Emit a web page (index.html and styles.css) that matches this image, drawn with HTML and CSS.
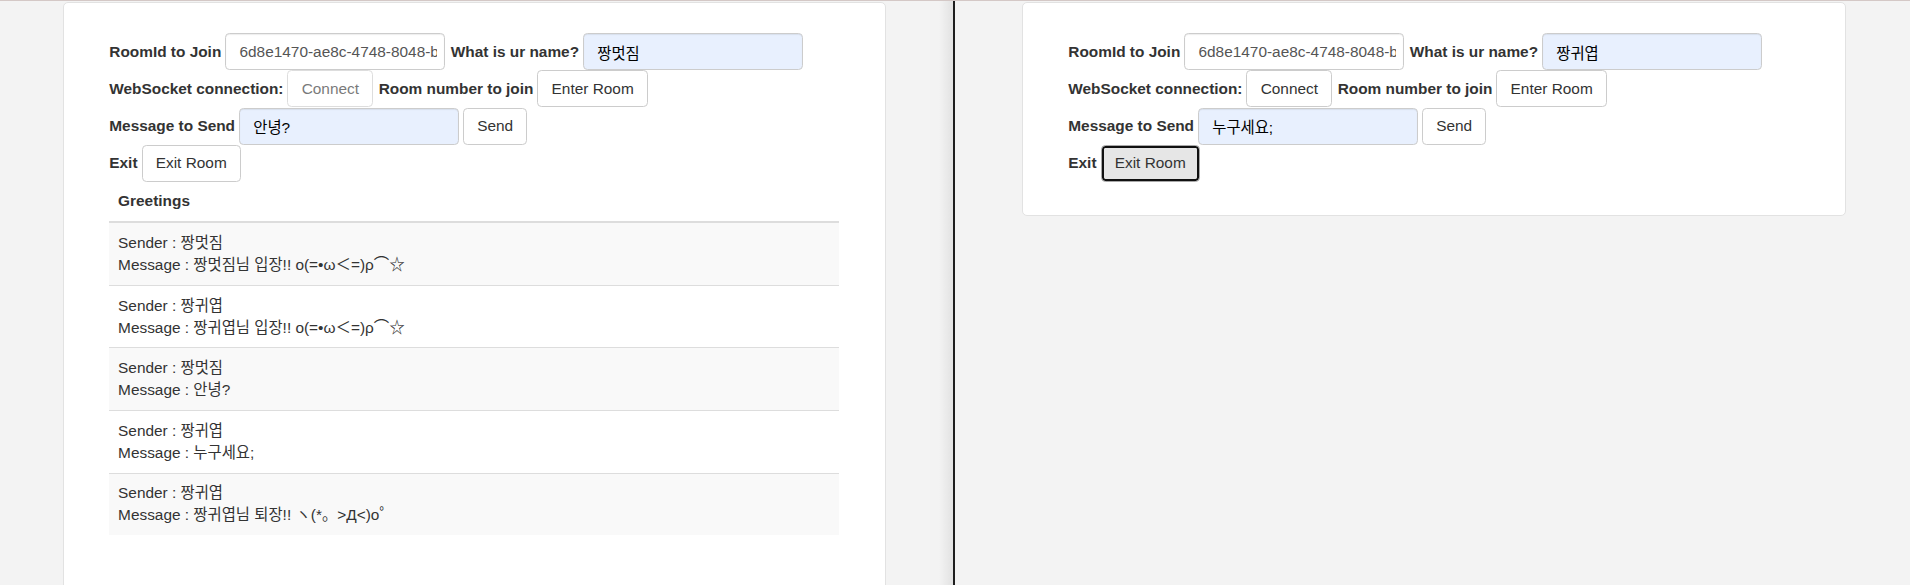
FILE: index.html
```html
<!DOCTYPE html>
<html lang="ko">
<head>
<meta charset="utf-8">
<title>Chat rooms</title>
<link rel="stylesheet" href="styles.css">
</head>
<body>
<div class="screen">
  <div class="pane pane-left">
    <div class="card card-left">
      <div class="row">
        <label class="lbl">RoomId to Join</label>
        <input class="ctl inp inp-room" type="text" value="6d8e1470-ae8c-4748-8048-b1c2d3e4f5a6">
        <label class="lbl">What is ur name?</label>
        <input class="ctl inp auto" type="text" value="짱멋짐">
      </div>
      <div class="row">
        <label class="lbl">WebSocket connection:</label>
        <button class="ctl btn" disabled>Connect</button>
        <label class="lbl">Room number to join</label>
        <button class="ctl btn">Enter Room</button>
      </div>
      <div class="row">
        <label class="lbl">Message to Send</label>
        <input class="ctl inp auto" type="text" value="안녕?">
        <button class="ctl btn">Send</button>
      </div>
      <div class="row">
        <label class="lbl">Exit</label>
        <button class="ctl btn">Exit Room</button>
      </div>
      <table class="table">
        <thead>
          <tr><th>Greetings</th></tr>
        </thead>
        <tbody>
          <tr><td>Sender : 짱멋짐<br>Message : 짱멋짐님 입장!! o(=•ω＜=)ρ⌒☆</td></tr>
          <tr><td>Sender : 짱귀엽<br>Message : 짱귀엽님 입장!! o(=•ω＜=)ρ⌒☆</td></tr>
          <tr><td>Sender : 짱멋짐<br>Message : 안녕?</td></tr>
          <tr><td>Sender : 짱귀엽<br>Message : 누구세요;</td></tr>
          <tr><td>Sender : 짱귀엽<br>Message : 짱귀엽님 퇴장!! ヽ(*。&gt;Д&lt;)o゜</td></tr>
        </tbody>
      </table>
    </div>
  </div>
  <div class="divider"></div>
  <div class="pane pane-right">
    <div class="card card-right">
      <div class="row">
        <label class="lbl">RoomId to Join</label>
        <input class="ctl inp inp-room" type="text" value="6d8e1470-ae8c-4748-8048-b1c2d3e4f5a6">
        <label class="lbl">What is ur name?</label>
        <input class="ctl inp auto" type="text" value="짱귀엽">
      </div>
      <div class="row">
        <label class="lbl">WebSocket connection:</label>
        <button class="ctl btn">Connect</button>
        <label class="lbl">Room number to join</label>
        <button class="ctl btn">Enter Room</button>
      </div>
      <div class="row">
        <label class="lbl">Message to Send</label>
        <input class="ctl inp auto" type="text" value="누구세요;">
        <button class="ctl btn">Send</button>
      </div>
      <div class="row">
        <label class="lbl">Exit</label>
        <button class="ctl btn btn-focus">Exit Room</button>
      </div>
    </div>
  </div>
</div>
</body>
</html>
```
FILE: styles.css
```css
html, body {
  margin: 0;
  padding: 0;
  overflow: hidden;
}

body {
  font-family: "Liberation Sans", Arial, "Noto Sans CJK KR", sans-serif;
  font-size: 15.4px;
  line-height: 22px;
  color: #333;
  background: #f3f3f3;
}

.screen {
  display: flex;
  height: 585px;
  box-sizing: border-box;
  border-top: 1px solid #d4c8c6;
}

.pane {
  position: relative;
  overflow: hidden;
  background: #f3f3f3;
}

.pane-left {
  width: 953px;
  flex: none;
}

.pane-left::after {
  content: "";
  position: absolute;
  top: 0;
  right: 0;
  bottom: 0;
  width: 14px;
  background: linear-gradient(to right, rgba(0, 0, 0, 0), rgba(0, 0, 0, 0.07));
}

.divider {
  width: 2px;
  flex: none;
  background: #1e1e1e;
}

.pane-right {
  flex: 1;
}

.card {
  background: #fff;
  border: 1px solid #e2e2e2;
  border-radius: 5px;
  margin-top: 1px;
  padding: 30.3px 46.5px 33px 45.3px;
  box-sizing: border-box;
}

.card-left {
  width: 823px;
  margin-left: 63px;
  min-height: 640px;
}

.card-right {
  width: 824px;
  margin-left: 67px;
}

.row {
  display: flex;
  align-items: center;
  height: 37.1px;
  gap: 4px;
}

.lbl {
  font-weight: bold;
  white-space: nowrap;
}

.ctl + .lbl {
  margin-left: 1.5px;
}

.ctl {
  height: 37px;
  box-sizing: border-box;
  border: 1.1px solid #ccc;
  border-radius: 4.4px;
  padding: 6.4px 13.2px;
  font-family: inherit;
  font-size: 15.4px;
  line-height: 22px;
  margin: 0;
  flex: none;
}

.inp {
  width: 220px;
  color: #555;
  background: #fff;
  box-shadow: inset 0 1.1px 1.1px rgba(0, 0, 0, 0.075);
  outline: none;
}

.inp-room {
  padding-right: 7px;
}

.inp.auto {
  background: #e8f0fe;
  color: #000;
}

.btn {
  background: #fff;
  color: #333;
  cursor: pointer;
}

.btn:disabled {
  opacity: 0.65;
  color: #333;
}

.btn-focus {
  background: #e6e6e6;
  border-color: #a8a8a8;
  box-shadow: inset 0 0 0 2px #111;
}

.table {
  width: 100%;
  border-collapse: collapse;
  border-spacing: 0;
}

.table th {
  text-align: left;
  font-weight: bold;
  padding: 8.8px;
  border-bottom: 2.2px solid #ddd;
}

.table td {
  padding: 8.8px;
  border-top: 1.1px solid #ddd;
  vertical-align: top;
}

.table tbody tr:nth-child(odd) td {
  background: #f9f9f9;
}
```
